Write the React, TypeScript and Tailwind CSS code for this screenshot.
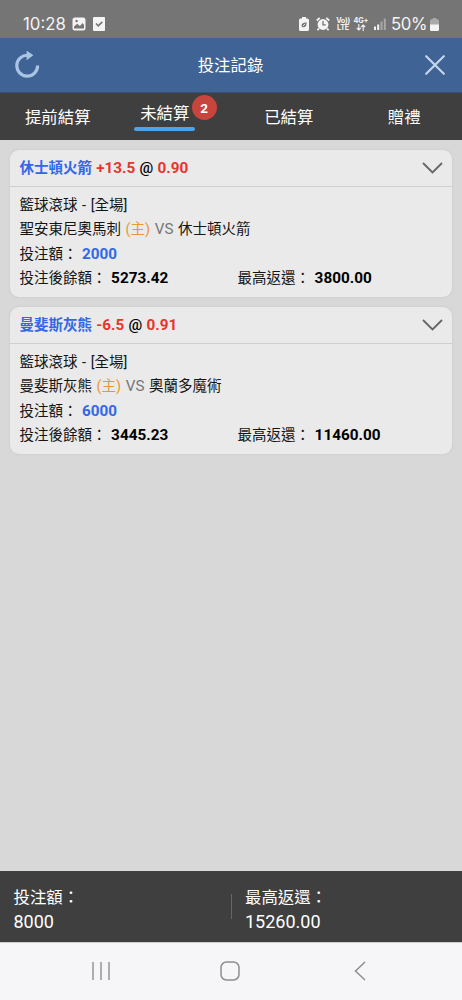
interface Bet {
  team: string;
  handicap: string;
  odds: string;
  home: string;
  away: string;
  stake: string;
  balance: string;
  maxReturn: string;
}

const bets: Bet[] = [
  {
    team: '休士頓火箭',
    handicap: '+13.5',
    odds: '0.90',
    home: '聖安東尼奧馬刺',
    away: '休士頓火箭',
    stake: '2000',
    balance: '5273.42',
    maxReturn: '3800.00',
  },
  {
    team: '曼斐斯灰熊',
    handicap: '-6.5',
    odds: '0.91',
    home: '曼斐斯灰熊',
    away: '奧蘭多魔術',
    stake: '6000',
    balance: '3445.23',
    maxReturn: '11460.00',
  },
];

export default function App() {
  return (
    <div className="flex h-[1000px] w-[462px] flex-col overflow-hidden bg-[#d8d8d8] font-['Roboto','Noto_Sans_CJK_TC',sans-serif] text-black">
      <StatusBar />
      <header className="flex h-[54px] shrink-0 items-center justify-between bg-[#3f6394] px-[14px]">
        <svg className="h-7 w-7" viewBox="0 0 28 28" fill="none">
          <path d="M23.6 14.5A10.4 10.4 0 1 1 14 4.3" stroke="#a9c4e4" strokeWidth="3.2" />
          <path d="M12.6 -0.4L19.4 4.3L12.6 9.2Z" fill="#a9c4e4" />
        </svg>
        <h1 className="mr-[6px] pt-[2px] text-[16.4px] leading-6 text-white">投注記錄</h1>
        <svg className="mr-[3px] h-5 w-5" viewBox="0 0 20 20" fill="none">
          <path d="M1.2 1.2L18.8 18.8M18.8 1.2L1.2 18.8" stroke="#c3d6ec" strokeWidth="2.2" strokeLinecap="round" />
        </svg>
      </header>
      <Tabs />
      <main className="flex-1 space-y-[10px] px-[10px] pt-[10px]">
        {bets.map((bet) => (
          <BetCard key={bet.team} bet={bet} />
        ))}
      </main>
      <footer className="flex h-[71px] shrink-0 items-center bg-[#3f3f3f] text-white">
        <Total label="投注額：" value="8000" />
        <div className="h-[25px] w-px bg-[#666]" />
        <Total label="最高返還：" value="15260.00" />
      </footer>
      <NavBar />
    </div>
  );
}

function StatusBar() {
  return (
    <div className="flex h-[38px] shrink-0 items-center bg-[#757575] pl-[23px] pr-[23px] pt-[10px] font-['Inter',sans-serif] text-[#f4f4f4]">
      <span className="w-[49px] text-[16.8px] leading-5">10:28</span>
      <svg className="h-[14px] w-[14px]" viewBox="0 0 14 14">
        <rect x="0.5" y="0.5" width="13" height="13" rx="2.5" fill="currentColor" />
        <path d="M2 11.5V9.5L5.2 6.8L8 9L10.5 6L12 8V11.5Z" fill="#757575" />
        <circle cx="4.6" cy="4" r="1.2" fill="#757575" />
      </svg>
      <svg className="ml-[7px] h-[14px] w-3" viewBox="0 0 12 14">
        <rect width="12" height="14" rx="1" fill="currentColor" />
        <path d="M3 6.5L5.3 8.9L9.3 4.9" stroke="#757575" strokeWidth="1.6" fill="none" />
      </svg>
      <div className="ml-auto flex items-center">
        <svg className="h-[14px] w-[10px]" viewBox="0 0 10 14">
          <path d="M3 0H7V1.5H8.5Q10 1.5 10 3V12.5Q10 14 8.5 14H1.5Q0 14 0 12.5V3Q0 1.5 1.5 1.5H3Z" fill="currentColor" />
          <path d="M2.6 9.5Q1.8 5.5 7.6 5.2Q8 10.4 3.8 10.2Z" fill="#757575" />
          <path d="M4 9L6.2 6.8" stroke="currentColor" strokeWidth="0.9" />
        </svg>
        <svg className="ml-[7px] h-[14px] w-[14px]" viewBox="0 0 14 14">
          <circle cx="7" cy="7.5" r="5.4" fill="currentColor" />
          <path d="M0.8 3.5L3.7 0.9M13.2 3.5L10.3 0.9M3 11.5L1.4 13.2M11 11.5L12.6 13.2" stroke="currentColor" strokeWidth="1.8" />
          <path d="M7 4V7.8H9.8" stroke="#757575" strokeWidth="1.3" fill="none" />
        </svg>
        <div className="ml-[4px] w-[18px] text-center text-[7.3px] font-bold leading-[7px] tracking-[-0.3px]">
          <div>Vo))</div>
          <div>LTE</div>
        </div>
        <div className="w-[18px] text-center text-[7.3px] font-bold leading-[7px] tracking-[-0.2px]">
          <div>4G+</div>
          <svg className="mx-auto h-[7px] w-[10px]" viewBox="0 0 10 7" fill="none" stroke="currentColor" strokeWidth="1.1">
            <path d="M2.8 0V6M0.8 4L2.8 6L4.8 4M7.2 7V1M5.2 3L7.2 1L9.2 3" />
          </svg>
        </div>
        <svg className="ml-[4px] h-3 w-3" viewBox="0 0 12 12" fill="currentColor">
          <path d="M0 8.5H2V12H0ZM3.2 6.5H5.2V12H3.2Z" />
          <path d="M6.5 3.5H8.5V12H6.5ZM9.8 0.5H11.8V12H9.8Z" opacity=".4" />
        </svg>
        <span className="ml-[5px] w-[38px] whitespace-nowrap text-[16.8px] leading-5 tracking-[-0.4px]">50%</span>
        <svg className="ml-px h-[13px] w-[9px]" viewBox="0 0 10 13" preserveAspectRatio="none">
          <path d="M3 0H7V1.3H8.5Q10 1.3 10 3V7H0V3Q0 1.3 1.5 1.3H3Z" fill="#aaa" />
          <path d="M0 6.5H10V11.5Q10 13 8.5 13H1.5Q0 13 0 11.5Z" fill="currentColor" />
        </svg>
      </div>
    </div>
  );
}

function Tabs() {
  return (
    <nav className="grid h-12 shrink-0 grid-cols-4 border-t border-[#385275] bg-[#3f3f3f] text-[16.4px] leading-6 text-white">
      <div className="pt-[13px] text-center">提前結算</div>
      <div className="relative pt-[9px] pr-[17px] text-center">
        未結算
        <div className="mx-auto mt-px h-1 w-[61px] rounded-full bg-[#4fa3e6]" />
        <span className="absolute left-[76px] top-[2px] flex h-[25px] w-[25px] items-center justify-center rounded-full bg-[#c8453e] text-[13.5px] font-bold">
          2
        </span>
      </div>
      <div className="pt-[13px] text-center">已結算</div>
      <div className="pt-[13px] text-center">贈禮</div>
    </nav>
  );
}

function BetCard({ bet }: { bet: Bet }) {
  return (
    <section className="h-[147px] rounded-[9px] bg-[#eaeaea] text-[14.5px] shadow-[0_0_3px_rgba(0,0,0,0.08)]">
      <div className="flex h-[37px] items-center justify-between border-b border-[#cfcfcf] pl-[9.5px] pr-[9px] [word-spacing:0.6px]">
        <div className="whitespace-nowrap font-bold leading-6">
          <span className="text-[#3268e8]">{bet.team}</span>{' '}
          <span className="text-[15.3px] text-[#e6352c]">{bet.handicap}</span>{' '}
          <span className="text-[15.3px] font-medium">@</span>{' '}
          <span className="text-[15.3px] text-[#e6352c]">{bet.odds}</span>
        </div>
        <svg className="h-3 w-[21px]" viewBox="0 0 21 12" fill="none">
          <path d="M1 1L10.5 10.5L20 1" stroke="#666" strokeWidth="1.8" />
        </svg>
      </div>
      <div className="pl-[9.5px] pt-[6.5px] leading-[24.5px] text-[#151515] [word-spacing:1px]">
        <div>籃球滾球 - [全場]</div>
        <div>
          {bet.home} <span className="text-[#f09537]">(主)</span>{' '}
          <span className="text-[15.2px] leading-none text-[#777]">VS</span> {bet.away}
        </div>
        <div>
          投注額： <b className="text-[15.2px] leading-none text-[#3268e8]">{bet.stake}</b>
        </div>
        <div className="flex">
          <div className="w-[218px]">
            投注後餘額： <b className="text-[15.3px] leading-none text-black">{bet.balance}</b>
          </div>
          <div>
            最高返還： <b className="text-[15.3px] leading-none text-black">{bet.maxReturn}</b>
          </div>
        </div>
      </div>
    </section>
  );
}

function Total({ label, value }: { label: string; value: string }) {
  return (
    <div className="w-[231px] pl-[13.5px] pt-[6px]">
      <div className="text-[16.4px] leading-6">{label}</div>
      <div className="text-[18px] leading-6">{value}</div>
    </div>
  );
}

function NavBar() {
  return (
    <div className="flex h-[58px] shrink-0 items-center border-t border-[#ccc] bg-[#f6f6f8] pb-px pl-[91px]">
      <svg className="h-[18px] w-5" viewBox="0 0 20 18" stroke="#8e8e90" strokeWidth="1.4">
        <path d="M2 0V18M10 0V18M18 0V18" />
      </svg>
      <svg className="ml-[109px] h-5 w-5" viewBox="0 0 20 20" fill="none">
        <rect x="1" y="1" width="18" height="18" rx="5.5" stroke="#8e8e90" strokeWidth="1.5" />
      </svg>
      <svg className="ml-[114px] h-5 w-3" viewBox="0 0 12 20" fill="none">
        <path d="M11 1L1.5 10L11 19" stroke="#8e8e90" strokeWidth="1.5" />
      </svg>
    </div>
  );
}
